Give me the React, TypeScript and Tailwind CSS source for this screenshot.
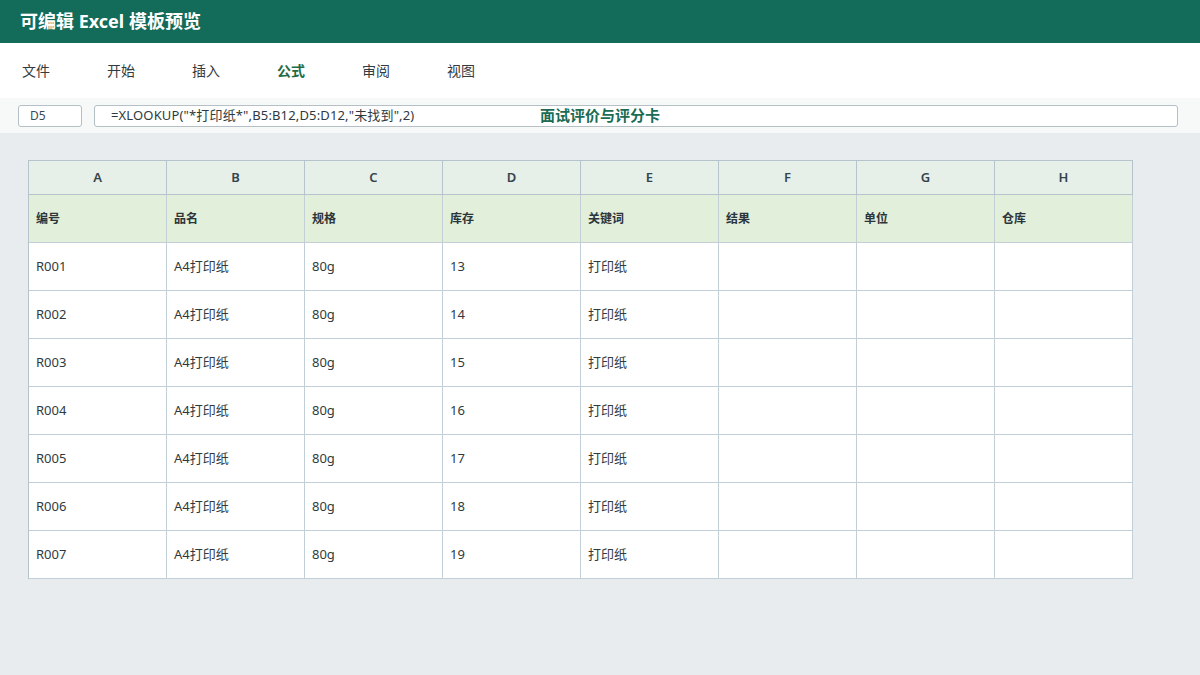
import React from "react";

const cols = ["A", "B", "C", "D", "E", "F", "G", "H"];
const heads = ["编号", "品名", "规格", "库存", "关键词", "结果", "单位", "仓库"];
const rows = [1, 2, 3, 4, 5, 6, 7].map((i) => [
  `R00${i}`,
  "A4打印纸",
  "80g",
  String(12 + i),
  "打印纸",
  "",
  "",
  "",
]);
const menu = ["文件", "开始", "插入", "公式", "审阅", "视图"];

export default function App() {
  return (
    <div
      className="w-[1200px] h-[675px] bg-[#e8ecee] flex flex-col overflow-hidden"
      style={{ fontFamily: '"Noto Sans", "Noto Sans CJK SC", sans-serif' }}
    >
      <div className="h-[43px] bg-[#136b5a] flex items-center pl-[20px] shrink-0">
        <span className="text-white font-bold text-[18px]">可编辑 Excel 模板预览</span>
      </div>
      <div className="h-[55px] bg-white flex items-center pl-[22px] shrink-0">
        {menu.map((m) => (
          <div
            key={m}
            className={`w-[85px] text-[14px] ${m === "公式" ? "font-bold text-[#1e6b45]" : "text-[#333a40]"}`}
          >
            {m}
          </div>
        ))}
      </div>
      <div className="h-[35px] bg-[#f7f9f9] flex items-center pl-[18px] pr-[22px] gap-[12px] shrink-0 relative">
        <div className="w-[64px] h-[22px] border border-[#b4c0c6] rounded-[3px] bg-white flex items-center pl-[11px] text-[12px] text-[#3c4a52]">
          D5
        </div>
        <div className="flex-1 h-[22px] border border-[#b4c0c6] rounded-[3px] bg-white flex items-center pl-[16px] text-[13px] tracking-[0.15px] text-[#2f3a40]">
          =XLOOKUP("*打印纸*",B5:B12,D5:D12,"未找到",2)
        </div>
        <div className="absolute left-0 right-0 top-0 h-full flex items-center justify-center pointer-events-none">
          <span className="font-bold text-[15px] text-[#1b6b55]">面试评价与评分卡</span>
        </div>
      </div>
      <div className="pt-[27px] pl-[28px]">
        <div className="grid grid-cols-[repeat(8,138px)] w-fit border-t border-l border-[#b4c3cc]">
          {cols.map((c) => (
            <div
              key={c}
              className="h-[34px] bg-[#e7efe9] border-r border-b border-[#b4c3cc] flex items-center justify-center text-[13px] font-semibold text-[#34444c]"
            >
              {c}
            </div>
          ))}
          {heads.map((h) => (
            <div
              key={h}
              className="h-[48px] bg-[#e2efda] border-r border-b border-[#c3cfd6] flex items-center pl-[7px] text-[12px] font-bold text-[#2c353a]"
            >
              {h}
            </div>
          ))}
          {rows.map((r, i) =>
            r.map((v, j) => (
              <div
                key={`${i}-${j}`}
                className="h-[48px] bg-white border-r border-b border-[#c3cfd6] flex items-center pl-[7px] text-[13px] text-[#2f3a40]"
              >
                {v}
              </div>
            ))
          )}
        </div>
      </div>
    </div>
  );
}
